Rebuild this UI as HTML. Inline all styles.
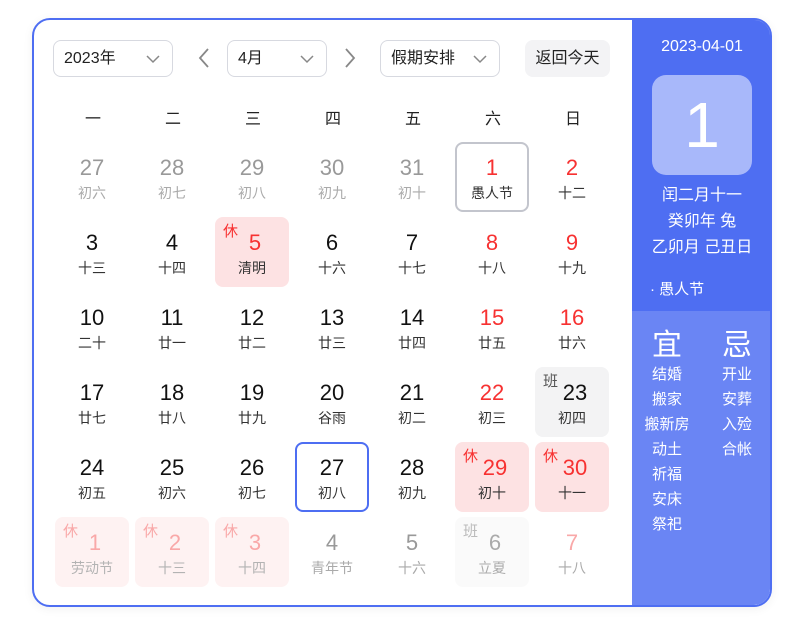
<!DOCTYPE html>
<html><head><meta charset="utf-8"><style>
*{margin:0;padding:0;box-sizing:border-box}
body{width:796px;height:626px;background:#fff;font-family:"Liberation Sans","Noto Sans CJK SC",sans-serif;position:relative;overflow:hidden}
.box{position:absolute;left:32px;top:18px;width:740px;height:589px;border:2px solid #4e6ef2;border-radius:18px;overflow:hidden;box-shadow:0 2px 10px rgba(0,0,0,.06)}
.a{position:absolute}
.sel{position:absolute;top:20px;height:37px;border:1px solid #d7d9e0;border-radius:8px;font-size:16px;line-height:35px;padding-left:10px;color:#222}
.chev{position:absolute;right:12px;top:11px}
.wk{position:absolute;top:85px;width:80px;text-align:center;font-size:16px;color:#222}
.c{position:absolute;width:74px;height:70px;border-radius:8px;text-align:center}
.n{position:absolute;left:0;right:0;top:13px;font-size:22px;line-height:26px}
.l{position:absolute;left:0;right:0;top:42px;font-size:14px;line-height:18px}
.t{position:absolute;left:8px;top:6px;font-size:15px;line-height:18px}
.rp{position:absolute;left:598px;top:0;width:140px;height:100%;background:#6a85f4}
.rt{position:absolute;left:0;top:0;width:140px;height:291px;background:#4e6ef2}
.w{color:#fff;text-align:center;position:absolute;left:0;width:140px}
</style></head><body>
<div class="box">
<div class="sel" style="left:19px;width:120px">2023年<svg class="chev" width="14" height="14" viewBox="0 0 14 14"><path d="M1 4l6 6 6-6" fill="none" stroke="#888" stroke-width="1.5"/></svg></div>
<svg class="a" style="left:163px;top:28px" width="14" height="20" viewBox="0 0 14 20"><path d="M11 1L3 10l8 9" fill="none" stroke="#888" stroke-width="1.8"/></svg>
<svg class="a" style="left:309px;top:28px" width="14" height="20" viewBox="0 0 14 20"><path d="M3 1l8 9-8 9" fill="none" stroke="#888" stroke-width="1.8"/></svg>
<div class="sel" style="left:193px;width:100px">4月<svg class="chev" width="14" height="14" viewBox="0 0 14 14"><path d="M1 4l6 6 6-6" fill="none" stroke="#888" stroke-width="1.5"/></svg></div>
<div class="sel" style="left:346px;width:120px">假期安排<svg class="chev" width="14" height="14" viewBox="0 0 14 14"><path d="M1 4l6 6 6-6" fill="none" stroke="#888" stroke-width="1.5"/></svg></div>
<div class="a" style="left:491px;top:20px;width:85px;height:37px;background:#f3f3f5;border-radius:8px;font-size:16px;line-height:37px;text-align:center;color:#222">返回今天</div>
<div id="g"></div>
<div class="rp"><div class="rt">
<div class="w" style="top:18px;font-size:16px">2023-04-01</div>
<div class="a" style="left:20px;top:55px;width:100px;height:100px;border-radius:14px;background:#a8b8fa;color:#fff;font-size:64px;line-height:100px;text-align:center">1</div>
<div class="w" style="top:163px;font-size:16px;line-height:26px">闰二月十一<br>癸卯年 兔<br>乙卯月 己丑日</div>
<div class="a" style="left:18px;top:258px;color:#fff;font-size:15px">· 愚人节</div>
</div>
<div class="a" style="left:0;top:310px;width:70px;text-align:center;color:#fff"><div style="font-size:30px;line-height:32px">宜</div><div style="font-size:15px;line-height:25px">结婚<br>搬家<br>搬新房<br>动土<br>祈福<br>安床<br>祭祀</div></div>
<div class="a" style="left:70px;top:310px;width:70px;text-align:center;color:#fff"><div style="font-size:30px;line-height:32px">忌</div><div style="font-size:15px;line-height:25px">开业<br>安葬<br>入殓<br>合帐</div></div>
</div>
</div>
<script>
var wk="一二三四五六日",h="";
for(var i=0;i<7;i++)h+='<div class="wk" style="left:'+(19+80*i)+'px">'+wk[i]+'</div>';
var d=[["27","初六","p"],["28","初七","p"],["29","初八","p"],["30","初九","p"],["31","初十","p"],["1","愚人节","r1"],["2","十二","r"],
["3","十三","c"],["4","十四","c"],["5","清明","h"],["6","十六","c"],["7","十七","c"],["8","十八","r"],["9","十九","r"],
["10","二十","c"],["11","廿一","c"],["12","廿二","c"],["13","廿三","c"],["14","廿四","c"],["15","廿五","r"],["16","廿六","r"],
["17","廿七","c"],["18","廿八","c"],["19","廿九","c"],["20","谷雨","c"],["21","初二","c"],["22","初三","r"],["23","初四","b"],
["24","初五","c"],["25","初六","c"],["26","初七","c"],["27","初八","t"],["28","初九","c"],["29","初十","h"],["30","十一","h"],
["1","劳动节","nh"],["2","十三","nh"],["3","十四","nh"],["4","青年节","p"],["5","十六","p"],["6","立夏","nb"],["7","十八","nr"]];
for(var k=0;k<42;k++){var r=Math.floor(k/7),c=k%7,x=d[k],t=x[2];
var L=21+80*c,T=122+75*r,bg="",bd="",nc="#111",lc="#333",tag="",tc="";
if(t=="p"){nc="#999";lc="#aaa"}
if(t=="r"){nc="#f73131"}
if(t=="r1"){nc="#f73131";bd="border:2px solid #c3c5cd;"}
if(t=="t"){bd="border:2px solid #4e6ef2;"}
if(t=="h"){bg="#fde2e3";nc="#f73131";tag="休";tc="#f73131"}
if(t=="b"){bg="#f3f3f4";tag="班";tc="#555"}
if(t=="nh"){bg="#fef2f2";nc="#f9a8a8";lc="#b3b3b3";tag="休";tc="#f9a8a8"}
if(t=="nb"){bg="#fafafa";nc="#aaa";lc="#aaa";tag="班";tc="#bbb"}
if(t=="nr"){nc="#f9a8a8";lc="#aaa"}
var off=tag?"padding-left:6px;":"";
h+='<div class="c" style="left:'+L+'px;top:'+T+'px;'+(bg?'background:'+bg+';':'')+bd+'">'+(tag?'<div class="t" style="color:'+tc+'">'+tag+'</div>':'')+'<div class="n" style="color:'+nc+';'+off+(bd?'top:11px;':'')+'">'+x[0]+'</div><div class="l" style="color:'+lc+';'+(bd?'top:40px;':'')+'">'+x[1]+'</div></div>';}
document.getElementById("g").innerHTML=h;
</script>
</body></html>
